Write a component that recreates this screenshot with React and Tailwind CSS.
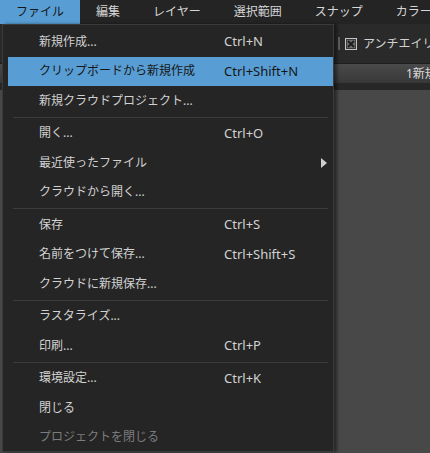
import React from "react";

const FONT = '"Noto Sans", "Noto Sans CJK JP", sans-serif';

const menuBar = ["ファイル", "編集", "レイヤー", "選択範囲", "スナップ", "カラー"];

// "-" is a separator
const fileMenu = [
  { label: "新規作成...", key: "Ctrl+N" },
  { label: "クリップボードから新規作成", key: "Ctrl+Shift+N", active: true },
  { label: "新規クラウドプロジェクト..." },
  "-",
  { label: "開く...", key: "Ctrl+O" },
  { label: "最近使ったファイル", sub: true },
  { label: "クラウドから開く..." },
  "-",
  { label: "保存", key: "Ctrl+S" },
  { label: "名前をつけて保存...", key: "Ctrl+Shift+S" },
  { label: "クラウドに新規保存..." },
  "-",
  { label: "ラスタライズ..." },
  { label: "印刷...", key: "Ctrl+P" },
  "-",
  { label: "環境設定...", key: "Ctrl+K" },
  { label: "閉じる" },
  { label: "プロジェクトを閉じる", disabled: true },
];

function MenuRow({ item }) {
  const color = item.active
    ? "bg-[#589ed4] text-[#161616]"
    : item.disabled
    ? "text-[#7c7c7c]"
    : "text-[#d2d2d2]";
  return (
    <div className={`ml-[5px] h-[29.5px] flex items-center relative ${color}`}>
      <span className="w-[216px] pl-[31px] whitespace-nowrap">{item.label}</span>
      {item.key && <span className="whitespace-nowrap text-[13px]">{item.key}</span>}
      {item.sub && (
        <svg className="absolute right-[6px] top-1/2 -translate-y-1/2" width="6" height="10" viewBox="0 0 6 10">
          <path d="M0 0 L6 5 L0 10 Z" fill="#cfcfcf" />
        </svg>
      )}
    </div>
  );
}

function CheckIcon() {
  return (
    <svg className="shrink-0" width="12" height="12" viewBox="0 0 12 12">
      <rect x="0.5" y="0.5" width="11" height="11" fill="#3a3a3a" stroke="#c4c4c4" />
      <rect x="2" y="2" width="8" height="8" fill="#6e6e6e" />
      <path d="M3 3 L9 9 M9 3 L3 9" stroke="#1c1c1c" strokeWidth="1.8" />
    </svg>
  );
}

export default function App() {
  return (
    <div className="w-[430px] h-[453px] bg-[#242424] relative overflow-hidden text-[12px]" style={{ fontFamily: FONT }}>
      {/* menu bar */}
      <div className="h-[24px] flex bg-[#242424]">
        {menuBar.map((m, i) => (
          <div
            key={m}
            className={`px-4 flex items-center whitespace-nowrap ${i === 0 ? "bg-[#589ed4] text-[#161616]" : "text-[#d6d6d6]"} ${i > 1 ? "ml-[1px]" : ""}`}
          >
            {m}
          </div>
        ))}
      </div>

      {/* toolbar */}
      <div className="h-[39px] bg-[#2a2a2a] flex items-center pl-[338px]">
        <div className="shrink-0 w-[2px] h-[13px] bg-[#5e5e5e] mr-[5px]" />
        <CheckIcon />
        <span className="ml-[6px] text-[#d2d2d2] whitespace-nowrap">アンチエイリアシング</span>
      </div>

      {/* document tab */}
      <div className="h-[20px] bg-gradient-to-b from-[#4a4a4a] to-[#383838] border-t border-[#1e1e1e] flex items-center pl-[406px] text-[#dcdcdc] whitespace-nowrap">
        1新規プロジェクト
      </div>
      <div className="h-[7px] bg-[#272727]" />

      {/* canvas */}
      <div className="h-[400px] bg-[#484848]" />

      {/* file menu dropdown */}
      <div className="absolute left-[2px] top-[24px] w-[332px] h-[428px] bg-[#252525] border border-[#3b3b3b] pt-[2px] shadow-[3px_0_3px_rgba(0,0,0,0.45)]">
        {fileMenu.map((item, i) =>
          item === "-" ? (
            <div key={i} className="h-[3px] flex items-center ml-[10px] mr-[5px]">
              <div className="h-px w-full bg-[#3c3c3c]" />
            </div>
          ) : (
            <MenuRow key={i} item={item} />
          )
        )}
      </div>
    </div>
  );
}
